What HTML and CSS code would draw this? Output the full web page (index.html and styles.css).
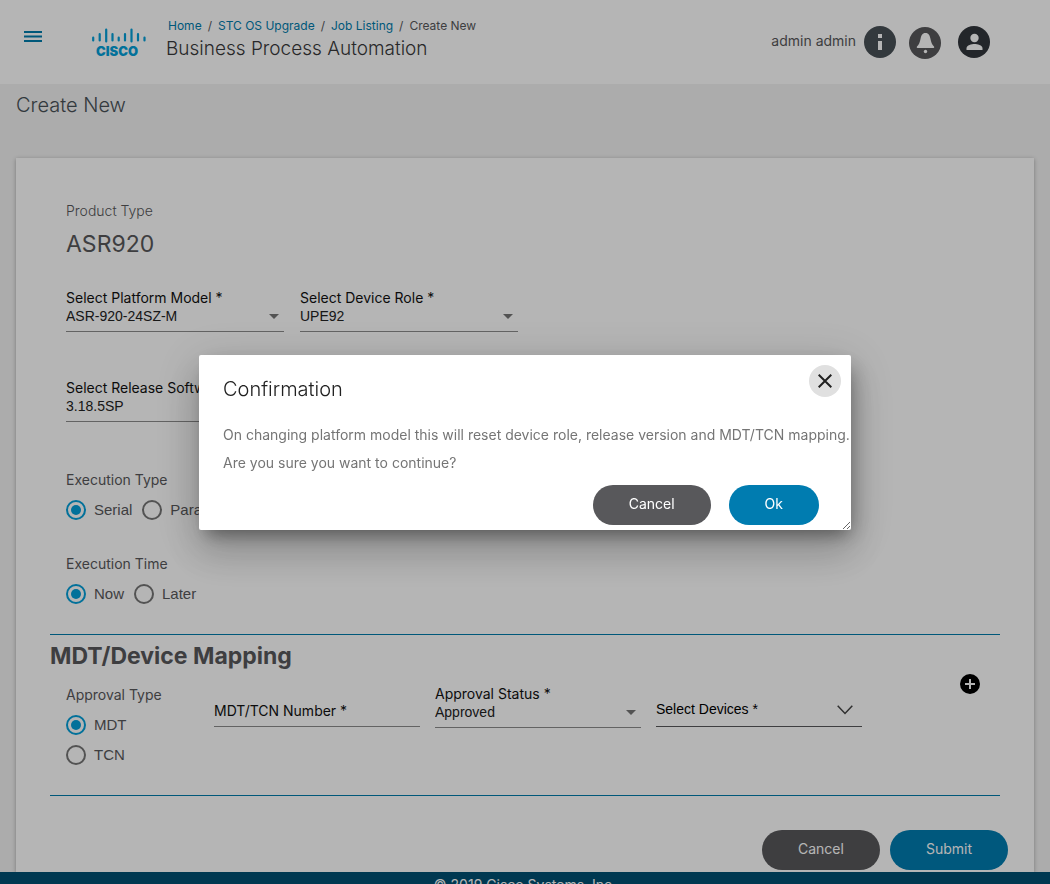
FILE: index.html
```html
<!DOCTYPE html>
<html lang="en">
<head>
<meta charset="utf-8">
<meta name="viewport" content="width=device-width, initial-scale=1">
<title>Business Process Automation</title>
<link rel="stylesheet" href="styles.css">
</head>
<body>
<header class="header">
  <button class="icon-button menu-button" type="button" aria-label="Menu">
    <svg width="18" height="12" viewBox="0 0 18 12" fill="currentColor"><path d="M0 0h18v2H0zM0 4.500h18v2H0zM0 9h18v2H0z"/></svg>
  </button>
  <svg class="logo" width="56" height="32" viewBox="0 0 56 32" role="img" aria-label="Cisco">
    <path d="M2.200 10.500v3M8.700 7v6.500M15.200 2.500v12M21.500 7v6.500M27.700 10.500v3M34 7v6.500M40.500 2.500v12M47 7v6.500M53.500 10.500v3" fill="none" stroke="currentColor" stroke-width="2.200" stroke-linecap="round"/>
    <text class="logo-text" x="5" y="29">CISCO</text>
  </svg>
  <div class="heading">
    <nav class="breadcrumb" aria-label="Breadcrumb">
      <a href="#">Home</a><span>/</span><a href="#">STC OS Upgrade</a><span>/</span><a href="#">Job Listing</a><span>/</span><span>Create New</span>
    </nav>
    <h1 class="app-title">Business Process Automation</h1>
  </div>
  <div class="user-bar">
    <span class="user-name">admin admin</span>
    <button class="icon-button" type="button" aria-label="Information">
      <svg width="32" height="32" viewBox="0 0 32 32"><circle cx="16" cy="16" r="16" fill="#495157"/><path d="M14 8h4v4h-4zM14 15h4v9h-4z" fill="#fff"/></svg>
    </button>
    <button class="icon-button bell" type="button" aria-label="Notifications">
      <svg width="32" height="32" viewBox="0 0 32 32"><circle cx="16" cy="16" r="16" fill="#58585b"/><path d="M16.500 6c-3.300 0-4.300 2.700-4.900 5.500-.7 3.600-1.600 6.300-3.600 8-.4.500-.3 1.500.5 1.500h16c.8 0 .9-1 .5-1.500-2-1.700-2.900-4.400-3.600-8C20.800 8.700 19.800 6 16.500 6z" fill="#fff"/><circle cx="16.500" cy="24.500" r="1.700" fill="#fff"/></svg>
    </button>
    <button class="icon-button" type="button" aria-label="Profile">
      <svg width="32" height="32" viewBox="0 0 32 32"><circle cx="16" cy="16" r="16" fill="#32363c"/><circle cx="16.500" cy="12" r="4.200" fill="#fff"/><path d="M8.500 24v-2c0-2.700 5.300-4.100 8-4.100s8 1.400 8 4.100v2z" fill="#fff"/></svg>
    </button>
  </div>
</header>

<main>
  <h2 class="page-title">Create New</h2>
  <form class="card">
    <div class="details">
      <p class="caption light">Product Type</p>
      <p class="product">ASR920</p>
      <div class="field-row">
        <div class="field">
          <label for="platform">Select Platform Model *</label>
          <div class="select-box">
            <select id="platform"><option>ASR-920-24SZ-M</option></select>
            <svg width="10" height="5" viewBox="0 0 10 5"><path d="M0 0h10L5 5z" fill="#757575"/></svg>
          </div>
        </div>
        <div class="field">
          <label for="role">Select Device Role *</label>
          <div class="select-box">
            <select id="role"><option>UPE92</option></select>
            <svg width="10" height="5" viewBox="0 0 10 5"><path d="M0 0h10L5 5z" fill="#757575"/></svg>
          </div>
        </div>
      </div>
      <div class="field-row release">
        <div class="field">
          <label for="release">Select Release Software *</label>
          <div class="select-box">
            <select id="release"><option>3.18.5SP</option></select>
            <svg width="10" height="5" viewBox="0 0 10 5"><path d="M0 0h10L5 5z" fill="#757575"/></svg>
          </div>
        </div>
      </div>
      <fieldset class="choice">
        <legend class="caption">Execution Type</legend>
        <div class="radios">
          <label><input type="radio" name="type" checked>Serial</label>
          <label><input type="radio" name="type">Parallel</label>
        </div>
      </fieldset>
      <fieldset class="choice time">
        <legend class="caption">Execution Time</legend>
        <div class="radios">
          <label><input type="radio" name="time" checked>Now</label>
          <label><input type="radio" name="time">Later</label>
        </div>
      </fieldset>
    </div>

    <section class="mapping">
      <h3 class="mapping-title">MDT/Device Mapping</h3>
      <div class="mapping-grid">
        <fieldset class="choice">
          <legend class="caption">Approval Type</legend>
          <div class="radios stacked">
            <label><input type="radio" name="approval" checked>MDT</label>
            <label><input type="radio" name="approval">TCN</label>
          </div>
        </fieldset>
        <input class="text-input" type="text" placeholder="MDT/TCN Number *" aria-label="MDT/TCN Number">
        <div class="field">
          <label for="status">Approval Status *</label>
          <div class="select-box">
            <select id="status"><option>Approved</option></select>
            <svg width="10" height="5" viewBox="0 0 10 5"><path d="M0 0h10L5 5z" fill="#757575"/></svg>
          </div>
        </div>
        <div class="select-box devices">
          <select aria-label="Select Devices"><option>Select Devices *</option></select>
          <svg width="16" height="10" viewBox="0 0 16 10"><path d="M.7.700L8 8.500 15.300.700" fill="none" stroke="#444" stroke-width="1.500"/></svg>
        </div>
        <button class="icon-button add" type="button" aria-label="Add mapping">
          <svg width="20" height="20" viewBox="0 0 20 20"><circle cx="10" cy="10" r="10"/><path d="M10 5v10M5 10h10" stroke="#fff" stroke-width="2"/></svg>
        </button>
      </div>
    </section>

    <div class="actions">
      <button class="button dark" type="button">Cancel</button>
      <button class="button primary" type="submit">Submit</button>
    </div>
  </form>
</main>
<footer class="footer">© 2019 Cisco Systems, Inc.</footer>

<div class="overlay">
  <div class="dialog" role="dialog" aria-modal="true" aria-labelledby="dialog-title">
    <h2 class="dialog-title" id="dialog-title">Confirmation</h2>
    <p class="dialog-text">On changing platform model this will reset device role, release version and MDT/TCN mapping.</p>
    <p class="dialog-text">Are you sure you want to continue?</p>
    <div class="dialog-actions">
      <button class="button dark" type="button">Cancel</button>
      <button class="button primary" type="button">Ok</button>
    </div>
    <button class="icon-button close" type="button" aria-label="Close">
      <svg width="14" height="14" viewBox="0 0 14 14"><path d="M.7.700l12.600 12.600M13.300.700L.7 13.300" stroke="#212121" stroke-width="2"/></svg>
    </button>
  </div>
</div>
</body>
</html>
```
FILE: styles.css
```css
* {
  box-sizing: border-box;
}

body {
  margin: 0;
  overflow: hidden;
  background: #f2f2f2;
  color: #58585b;
  font: 14px/20px Inter, "Liberation Sans", sans-serif;
}

h1, h2, h3, p {
  margin: 0;
}

button, input, select {
  font: inherit;
  color: inherit;
}

a {
  color: #007cad;
  text-decoration: none;
}

svg {
  display: block;
}

.icon-button {
  padding: 0;
  border: 0;
  background: none;
}

/* Header */
.header {
  display: flex;
  align-items: flex-start;
  height: 84px;
  padding: 0 60px 0 24px;
  background: #fff;
}

.menu-button {
  margin: 31px 49px 0 0;
  color: #007cad;
}

.logo {
  margin-top: 27px;
  color: #049fd9;
}

.logo-text {
  fill: currentColor;
  font-size: 13px;
  font-weight: 900;
}

.heading {
  margin: 16px 0 0 19px;
}

.breadcrumb {
  display: flex;
  gap: 6px;
  padding-left: 2px;
  font-size: 12px;
}

.app-title {
  color: #39393b;
  font-size: 19px;
  font-weight: 300;
  line-height: 26px;
}

.user-bar {
  display: flex;
  align-items: flex-start;
  margin: 26px 0 0 auto;
}

.user-name {
  margin: 5px 8px 0 0;
}

.bell {
  margin: 1px 17px 0 13px;
}

/* Page */
.page-title {
  padding: 7px 16px 39px;
  color: #495157;
  font-size: 20px;
  font-weight: 300;
  line-height: 28px;
}

.card {
  margin: 0 16px;
  padding: 43px 26px 2px 34px;
  background: #fff;
  box-shadow: 0 1px 4px rgba(0, 0, 0, .3);
}

.details {
  padding: 0 16px 30px;
}

.caption {
  padding: 0;
}

.light {
  font-weight: 300;
}

.product {
  margin: 9px 0 31px;
  font-size: 23px;
  line-height: 28px;
}

.field-row {
  display: flex;
  gap: 16px;
}

.field-row .field {
  width: 218px;
}

.release {
  margin: 47px 0 48px;
}

.field label {
  display: block;
  overflow: hidden;
  color: #111;
  line-height: 18px;
  white-space: nowrap;
}

.select-box {
  position: relative;
  border-bottom: 1px solid #8c8c8c;
}

.select-box select {
  display: block;
  width: 100%;
  height: 24px;
  padding: 0 20px 6px 0;
  border: 0;
  appearance: none;
  background: none;
  color: #222;
  font: 14px/18px "Liberation Sans", sans-serif;
}

.select-box svg {
  position: absolute;
  top: 7px;
  right: 5px;
  pointer-events: none;
}

/* Radio groups */
.choice {
  min-width: 0;
  margin: 0;
  padding: 0;
  border: 0;
}

.time {
  margin-top: 34px;
}

.radios {
  display: flex;
  gap: 10px;
  margin-top: 10px;
  font: 15px/20px "Liberation Sans", sans-serif;
}

.stacked {
  flex-direction: column;
}

.radios label {
  display: flex;
  gap: 8px;
}

.radios input {
  width: 20px;
  height: 20px;
  margin: 0;
  border: 2px solid #757575;
  border-radius: 50%;
  appearance: none;
}

.radios input:checked {
  padding: 3px;
  border-color: #049fd9;
  background: #049fd9 content-box;
}

/* Mapping */
.mapping {
  margin-right: 8px;
  padding-bottom: 30px;
  border: solid #007cad;
  border-width: 1px 0;
}

.mapping-title {
  margin: 7px 0 15px;
  font-size: 23px;
  font-weight: 700;
  line-height: 28px;
}

.mapping-grid {
  display: grid;
  grid-template-columns: 133px repeat(3, minmax(0, 206px)) 1fr;
  align-items: start;
  gap: 15px;
  padding: 0 20px 0 16px;
}

.text-input {
  width: 100%;
  height: 27px;
  margin-top: 15px;
  padding: 0 0 6px;
  border: 0;
  border-bottom: 1px solid #8c8c8c;
  background: none;
}

.text-input::placeholder {
  color: #111;
  opacity: 1;
}

.devices {
  margin-top: 15px;
  border-color: #58585b;
}

.devices select {
  height: 26px;
  padding-bottom: 8px;
  color: #000;
}

.devices svg {
  top: 5px;
  right: 9px;
}

.add {
  margin-top: -11px;
  justify-self: end;
}

/* Buttons */
.button {
  height: 40px;
  padding: 0 36px 2px;
  border: 0;
  border-radius: 20px;
  color: #fff;
}

.dark {
  background: #58585b;
}

.primary {
  background: #007cb0;
}

.actions {
  display: flex;
  justify-content: flex-end;
  gap: 10px;
  margin-top: 34px;
}

.footer {
  padding: 3px 16px;
  background: #005073;
  color: #fff;
  text-align: center;
}

/* Dialog */
.overlay {
  position: fixed;
  inset: 0;
  display: flex;
  align-items: center;
  justify-content: center;
  background: rgba(0, 0, 0, .29);
}

.dialog {
  position: relative;
  width: 652px;
  max-width: 100%;
  padding: 20px 0 5px 24px;
  overflow: hidden;
  resize: both;
  border-radius: 2px;
  background: #fff;
  box-shadow: 6px 8px 18px -4px rgba(0, 0, 0, .25), 0 11px 15px -7px rgba(0, 0, 0, .2), 0 24px 38px 3px rgba(0, 0, 0, .14), 0 9px 46px 8px rgba(0, 0, 0, .12);
}

.dialog-title {
  margin-bottom: 18px;
  color: #212121;
  font-size: 20px;
  font-weight: 300;
  line-height: 28px;
}

.dialog-text {
  color: #757575;
  line-height: 28px;
}

.dialog-actions {
  display: flex;
  justify-content: flex-end;
  gap: 18px;
  margin: 8px 32px 0 0;
}

.close {
  position: absolute;
  top: 10px;
  right: 10px;
  display: grid;
  width: 32px;
  height: 32px;
  place-items: center;
  border-radius: 50%;
  background: #e0e0e0;
}
```
